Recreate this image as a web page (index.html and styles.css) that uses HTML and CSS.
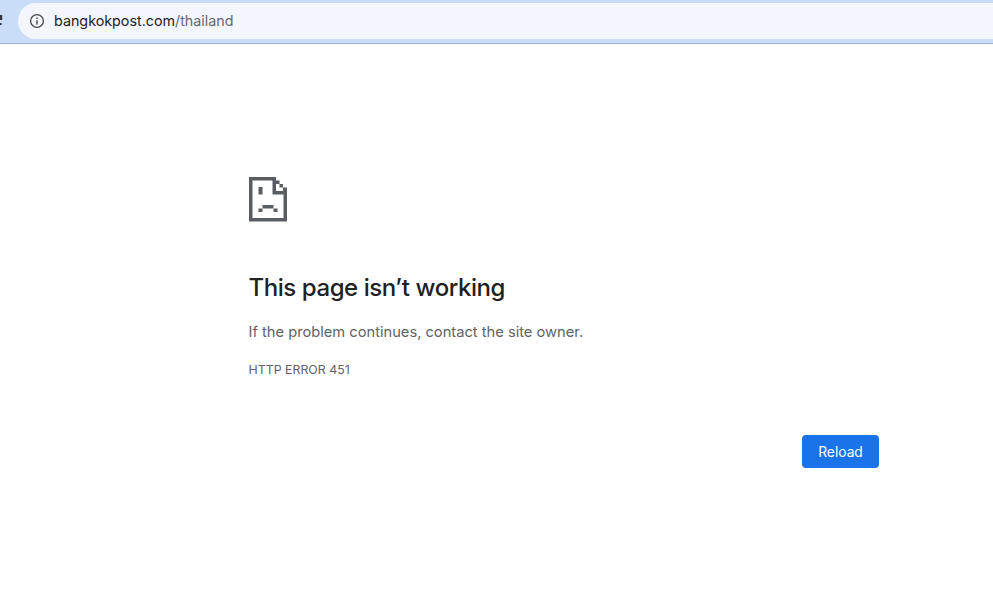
FILE: index.html
```html
<!DOCTYPE html>
<html>
    <head>
        <title>bangkokpost.com/thailand</title>
        <link rel="stylesheet" href="styles.css">
    </head>
    <body>
        <div class="toolbar">
            <div class="back-edge">
                <svg class="back-arrow" width="3" height="10" viewBox="0 0 3 10">
                    <rect x="0" y="0" width="2.2" height="5" fill="#33383f"/>
                    <rect x="0" y="8" width="1.6" height="2" fill="#33383f"/>
                </svg>
            </div>
            <div class="omnibox">
                <svg class="info-icon" width="16" height="16" viewBox="0 0 16 16">
                    <circle cx="8" cy="8" r="6.4" fill="none" stroke="#474a4f" stroke-width="1.3"/>
                    <rect x="7.3" y="7.2" width="1.4" height="4.4" fill="#474a4f"/>
                    <rect x="7.3" y="4.5" width="1.4" height="1.5" fill="#474a4f"/>
                </svg>
                <span class="host">bangkokpost.com</span><span class="path">/thailand</span>
            </div>
        </div>

        <div class="content">
            <div class="error-box">
                <svg class="sad-icon" width="38" height="45" viewBox="0 0 38 45">
                    <path fill="#5a5d61" d="M0 0H27V3.5H3.5V41H34.5V17H38V44.5H0Z"/>
                    <path fill="#5a5d61" d="M23.5 3H27V14H38V17.5H23.5Z"/>
                    <rect fill="#5a5d61" x="27" y="3.5" width="3.5" height="3.5"/>
                    <rect fill="#5a5d61" x="30.5" y="7" width="3.5" height="3.5"/>
                    <rect fill="#5a5d61" x="34" y="10.5" width="4" height="3.5"/>
                    <rect fill="#5a5d61" x="9.5" y="10" width="4" height="7.5"/>
                    <rect fill="#5a5d61" x="13.5" y="28" width="11" height="3.5"/>
                    <rect fill="#5a5d61" x="9.5" y="31.5" width="4" height="3.5"/>
                    <rect fill="#5a5d61" x="24.5" y="31.5" width="4" height="3.5"/>
                </svg>
                <h1>This page isn’t working</h1>
                <p class="message">If the problem continues, contact the site owner.</p>
                <p class="code">HTTP ERROR 451</p>
                <div class="buttons">
                    <button class="button">Reload</button>
                </div>
            </div>
        </div>
    </body>
</html>
```

FILE: styles.css
```css
body {
    margin: 0;
    background-color: white;
    font-family: Inter, "Liberation Sans", sans-serif;
    overflow: hidden;
}

.toolbar {
    display: flex;
    align-items: center;
    height: 43px;
    background-color: #c9dcf8;
    border-bottom: 1px solid #a3b3c9;
}

.back-edge {
    display: flex;
    align-items: center;
    width: 18px;
}

.back-arrow {
    margin-top: -3px;
}

.omnibox {
    display: flex;
    align-items: center;
    flex: 1;
    height: 36px;
    margin-top: -1px;
    padding-left: 11px;
    padding-bottom: 2px;
    box-sizing: border-box;
    background-color: #f3f7fd;
    border-radius: 18px 0 0 18px;
    font-size: 14.3px;
}

.info-icon {
    margin-top: 2px;
    margin-right: 9px;
}

.host {
    color: #1f2124;
}

.path {
    color: #65686d;
}

.content {
    padding: 133px 114px 0 248.5px;
}

.sad-icon {
    display: block;
}

h1 {
    margin: 50px 0 0 0;
    color: #202124;
    font-size: 24px;
    font-weight: 500;
    letter-spacing: -0.43px;
    line-height: 32px;
}

.message {
    margin: 18px 0 0 0;
    color: #5f6368;
    font-size: 14.68px;
    line-height: 20px;
}

.code {
    margin: 20px 0 0 0;
    color: #5f6368;
    font-size: 12.36px;
    line-height: 16px;
}

.buttons {
    display: flex;
    justify-content: flex-end;
    margin-top: 57px;
}

.button {
    width: 77px;
    height: 33px;
    background-color: #1a73e8;
    border: none;
    border-radius: 4px;
    color: white;
    font-family: Inter, "Liberation Sans", sans-serif;
    font-size: 13.8px;
}
```
